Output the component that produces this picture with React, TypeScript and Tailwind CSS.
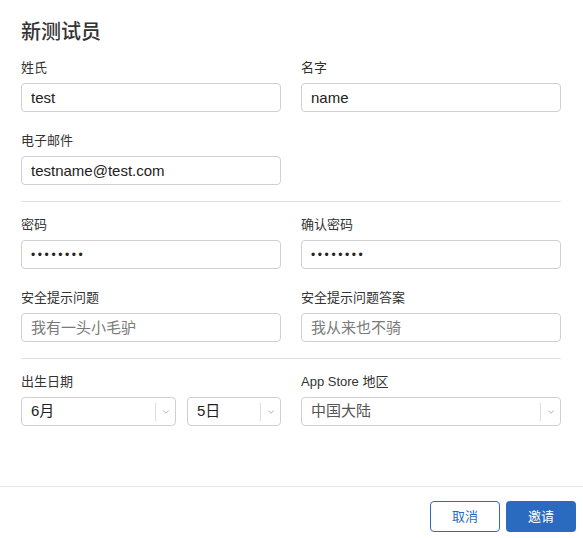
import { ChevronDown } from 'lucide-react';

const font = { fontFamily: '"Liberation Sans", "Noto Sans CJK SC", sans-serif' };

function Field({ label, value, placeholder, type = 'text' }: { label: string; value?: string; placeholder?: string; type?: string }) {
  return (
    <div className="flex flex-col">
      <label className="h-[18px] text-[13px] leading-[18px] text-[#333]">{label}</label>
      <input
        type={type}
        readOnly
        defaultValue={value}
        placeholder={placeholder}
        className={
          'mt-[6px] h-[29px] w-full rounded-[4px] border border-[#d0d0d0] bg-white px-[9px] text-[#222] outline-none placeholder:text-[#7a7a7a] ' +
          (type === 'password' ? 'text-[12px] tracking-[2.6px]' : 'text-[15px]')
        }
        style={font}
      />
    </div>
  );
}

function Select({ value, className, textClass = 'text-[#222]' }: { value: string; className: string; textClass?: string }) {
  return (
    <div className={'flex h-[29px] items-center rounded-[4px] border border-[#d0d0d0] bg-white ' + className}>
      <span className={'flex-1 pl-[9px] text-[15px] ' + textClass}>{value}</span>
      <span className="h-[18px] w-px bg-[#dcdcdc]" />
      <span className="flex w-[19px] items-center justify-center text-[#8a8a8a]">
        <ChevronDown className="h-[10px] w-[10px]" strokeWidth={1.6} />
      </span>
    </div>
  );
}

export default function App() {
  return (
    <div className="h-[538px] w-[583px] bg-white text-[#333]" style={font}>
      <div className="px-[21px] pr-[22px] pt-[18px]">
        <h1 className="h-[28px] text-[20px] font-medium leading-[28px] text-[#333]">新测试员</h1>

        <div className="mt-[13px] grid grid-cols-2 gap-x-5 gap-y-5">
          <Field label="姓氏" value="test" />
          <Field label="名字" value="name" />
          <Field label="电子邮件" value="testname@test.com" />
        </div>

        <div className="mt-4 h-px bg-[#e2e2e2]" />

        <div className="mt-[14px] grid grid-cols-2 gap-x-5 gap-y-5">
          <Field label="密码" type="password" value="12345678" />
          <Field label="确认密码" type="password" value="12345678" />
          <Field label="安全提示问题" placeholder="我有一头小毛驴" />
          <Field label="安全提示问题答案" placeholder="我从来也不骑" />
        </div>

        <div className="mt-4 h-px bg-[#e2e2e2]" />

        <div className="mt-[14px] grid grid-cols-2 gap-x-5">
          <div className="flex flex-col">
            <span className="h-[18px] text-[13px] leading-[18px]">出生日期</span>
            <div className="mt-[6px] flex gap-[11px]">
              <Select value="6月" className="w-[155px]" />
              <Select value="5日" className="flex-1" />
            </div>
          </div>
          <div className="flex flex-col">
            <span className="h-[18px] text-[13px] leading-[18px]">App Store 地区</span>
            <div className="mt-[6px] flex">
              <Select value="中国大陆" className="flex-1" textClass="text-[#555]" />
            </div>
          </div>
        </div>
      </div>

      <div className="mt-[60px] h-px bg-[#e6e6e6]" />

      <div className="flex justify-end gap-[6px] pr-[7px] pt-[14px]">
        <button className="h-[31px] w-[70px] rounded-[4px] border border-[#2a6bc0] bg-white text-[13px] text-[#2a6bc0]">
          取消
        </button>
        <button className="h-[31px] w-[70px] rounded-[4px] bg-[#2a6bc0] text-[13px] text-white">
          邀请
        </button>
      </div>
    </div>
  );
}
